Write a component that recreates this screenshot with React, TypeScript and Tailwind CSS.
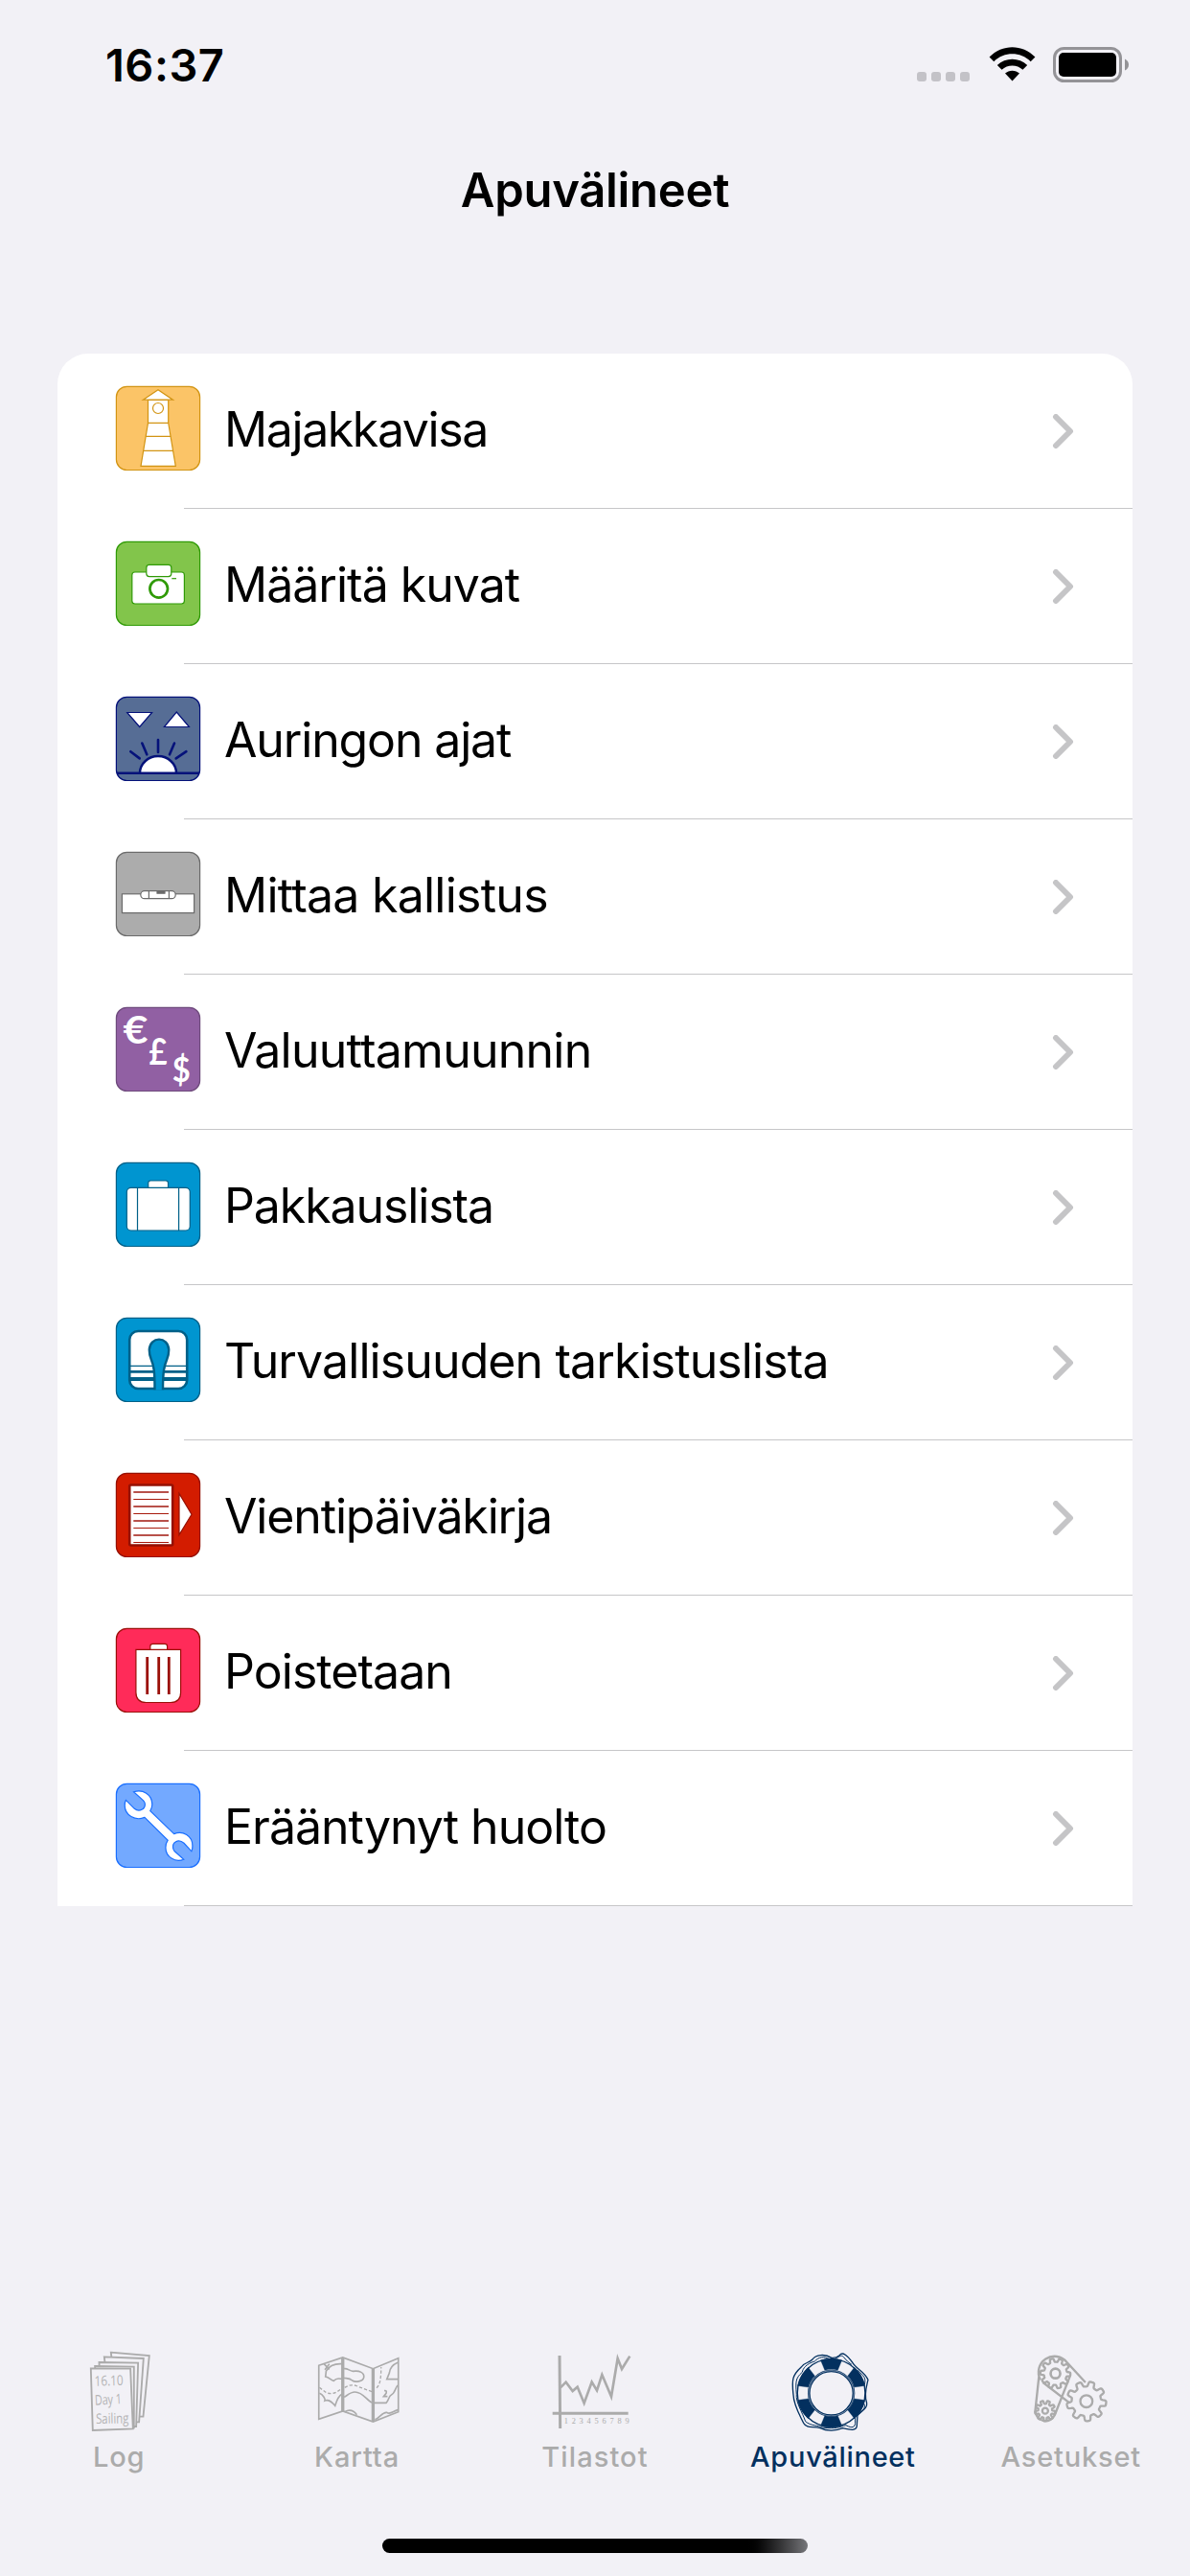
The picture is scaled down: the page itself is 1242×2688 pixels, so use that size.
import type { ReactNode } from "react";

type TileProps = { fill: string; stroke: string; children: ReactNode };

function Tile({ fill, stroke, children }: TileProps) {
  return (
    <svg className="h-[90px] w-[90px] shrink-0" viewBox="0 0 90 90" fill="#fff" stroke={stroke} strokeWidth="1.2">
      <rect x="1.4" y="1.3" width="87.2" height="87.2" rx="11" fill={fill} />
      {children}
    </svg>
  );
}

const tools = [
  {
    label: "Majakkavisa",
    tracking: "tracking-[-1.4px]",
    icon: (
      <Tile fill="#fbc467" stroke="#d29413">
        <path d="M34.5 39.3V15.3H55.7V39.3L63.3 84.3H27Z" />
        <path d="M29.3 15.2 45 4.8 60.5 15.2Z" />
        <path d="M34.5 39.3H55.7M32.2 53.3H58.2M29.8 68.3H60.8" />
        <circle cx="45" cy="24" r="5.5" />
      </Tile>
    ),
  },
  {
    label: "Määritä kuvat",
    tracking: "tracking-[-1px]",
    icon: (
      <Tile fill="#82c54b" stroke="#2f9a06">
        <rect x="17.8" y="33" width="54.6" height="33" rx="3" />
        <rect x="32.8" y="25.4" width="26" height="12.2" rx="3" />
        <circle cx="45.7" cy="50.3" r="9.3" strokeWidth="2.7" />
        <path d="M59.3 39.7H64" />
      </Tile>
    ),
  },
  {
    label: "Auringon ajat",
    tracking: "tracking-[-1.15px]",
    icon: (
      <Tile fill="#566d95" stroke="#05127a">
        <path d="M12.7 17.5H38.6L25.7 32.5ZM51.4 32.5H77.4L64.3 17Z" />
        <path
          d="M45 46V59M28.3 49.5 33.3 61.3M62 49.5 57 61.3M16.3 58.2 25.7 65.4M74.4 58.2 63.7 65.4"
          strokeWidth="2.6"
          strokeLinecap="round"
        />
        <path d="M26 80.7A19 17.6 0 0 1 64 80.7" strokeWidth="2.5" />
        <path d="M2 80.7H88" strokeWidth="2.6" />
      </Tile>
    ),
  },
  {
    label: "Mittaa kallistus",
    tracking: "tracking-[-0.75px]",
    icon: (
      <Tile fill="#acacac" stroke="#6b6b6b">
        <rect x="7.4" y="44.8" width="75.2" height="19.8" />
        <rect x="26.8" y="41.7" width="36.4" height="8" rx="4" />
        <path d="M35.4 41.7V49.7M56.4 41.7V49.7" />
        <path d="M44 41.8H52V44.2H44Z" fill="#6b6b6b" />
      </Tile>
    ),
  },
  {
    label: "Valuuttamuunnin",
    tracking: "tracking-[-0.75px]",
    icon: (
      <Tile fill="#9160a3" stroke="#6e4a7c">
        <g className="font-['Lato',sans-serif]" stroke="none" fontWeight="700">
          <text x="8.5" y="38.5" fontSize="41" textLength="26" lengthAdjust="spacingAndGlyphs">€</text>
          <text x="35.5" y="61.3" fontSize="38" textLength="19" lengthAdjust="spacingAndGlyphs">£</text>
          <text x="59.8" y="79.3" fontSize="37" textLength="19" lengthAdjust="spacingAndGlyphs">$</text>
        </g>
      </Tile>
    ),
  },
  {
    label: "Pakkauslista",
    tracking: "tracking-[-1.1px]",
    icon: (
      <Tile fill="#0095d0" stroke="#006088">
        <path d="M34.7 27.3V22.5Q34.7 20 37.2 20H53Q55.5 20 55.5 22.5V27.3" />
        <rect x="12.3" y="27.3" width="66" height="44.7" rx="4.5" />
        <path d="M23.5 27.3V72M66.6 27.3V72" />
      </Tile>
    ),
  },
  {
    label: "Turvallisuuden tarkistuslista",
    tracking: "tracking-[-0.9px]",
    icon: (
      <Tile fill="#0095d0" stroke="#006088">
        <rect x="15.2" y="15" width="60" height="60" rx="9" strokeWidth="2.6" />
        <path d="M16 51.4H74.5" />
        <path d="M16 57.4H74.5" strokeWidth="2.8" />
        <path d="M16 65H74.5" strokeWidth="4" />
        <path
          d="M41.5 76.3C41.5 56 40.5 51 37.8 44.5C35.8 40 35.8 38 35.8 34.5C36.5 20 55.5 20 56.2 34.5C56.2 38 56.2 40 54.2 44.5C51.5 51 50 56 50 76.3"
          fill="#0095d0"
          strokeWidth="2.4"
        />
      </Tile>
    ),
  },
  {
    label: "Vientipäiväkirja",
    tracking: "tracking-[-1.15px]",
    icon: (
      <Tile fill="#d31c00" stroke="#961003">
        <rect x="15.2" y="13.5" width="45" height="63" rx="1.5" strokeWidth="2.6" />
        <path d="M19.3 21H56M19.3 36H56M19.3 51H56M19.3 66H56" stroke="#b8514a" strokeWidth="2" />
        <path d="M19.3 28.5H56M19.3 43.5H56M19.3 58.5H56M19.3 73.5H56" stroke="#a81a0c" strokeWidth="1" />
        <path d="M67 22.5V65.5L80 44.3Z" />
      </Tile>
    ),
  },
  {
    label: "Poistetaan",
    tracking: "tracking-[-0.95px]",
    icon: (
      <Tile fill="#ff2b59" stroke="#9b0f08">
        <path d="M36.8 23.4V20Q36.8 17.3 39.5 17.3H52Q54.6 17.3 54.6 20V23.4" />
        <path d="M21.9 23.4H68.6V68Q68.6 78.5 58 78.5H32.5Q21.9 78.5 21.9 68Z" />
        <path d="M33.7 31V70M45.7 31V70M56.3 31V70" strokeWidth="2.8" />
      </Tile>
    ),
  },
  {
    label: "Erääntynyt huolto",
    tracking: "tracking-[-1px]",
    icon: (
      <Tile fill="#73a9ff" stroke="#1a6fff">
        <path d="M19.5 9.8C29 6.5 38.8 12.5 38.8 22.8Q38.8 26.5 36.8 29.6L61.6 53.6C71 50 80.8 55.5 80.9 66Q81 69.5 79.9 71.8L72 63.3C66 58 59.5 62.5 60.6 68.5Q61 70.5 62.5 72L71.8 80.3C62.5 84 53 77.5 52.9 68Q52.9 63.5 55.2 60.2L31 36.4C21 40.5 10.3 34 10.2 24Q10.2 20.5 11.4 18.4L20.3 27.3C25.5 31.5 32 27.5 31.3 22Q31 20.3 29.4 18.6Z" />
      </Tile>
    ),
  },
];

// closed outline of a cog wheel with rounded teeth
function gear(cx: number, cy: number, inner: number, outer: number, teeth: number, turn: number) {
  const mid = (inner + outer) / 2;
  const amp = (outer - inner) / 2;
  const points: string[] = [];
  for (let i = 0; i < 240; i++) {
    const a = (i / 240) * Math.PI * 2;
    const r = mid + amp * Math.tanh(3 * Math.sin(teeth * a + turn));
    points.push(`${(cx + r * Math.cos(a)).toFixed(1)} ${(cy + r * Math.sin(a)).toFixed(1)}`);
  }
  return `M${points.join("L")}Z`;
}

// one coloured band of the life ring, centred on the given angle
function band(angle: number) {
  const at = (r: number, deg: number) => {
    const a = (deg * Math.PI) / 180;
    return `${(984 + r * Math.cos(a)).toFixed(1)} ${(231 + r * Math.sin(a)).toFixed(1)}`;
  };
  return `M${at(108, angle - 18)}A108 108 0 0 1 ${at(108, angle + 18)}L${at(74, angle + 16)}A74 74 0 0 0 ${at(74, angle - 16)}Z`;
}

const tabs = [
  {
    label: "Log",
    tracking: "tracking-[0.8px]",
    icon: (
      <svg className="h-[90px] w-[100px]" viewBox="42.6 90 300 270" fill="#f2f1f6" stroke="#ababab" strokeWidth="5.5">
        <path d="M168 104 288 114 269 305 190 305Z" />
        <path d="M147 118 270 123 256 322 170 322Z" />
        <path d="M131 135 253 137 247 336 140 336Z" />
        <path d="M118 147 240 149 240 340 120 340Z" />
        <path d="M105 154 229 155 237 343 111 348Z" />
        <g className="font-['Open_Sans',sans-serif]" fill="#b4b4b5" stroke="none">
          <text x="117" y="209" fontSize="44" textLength="90" lengthAdjust="spacingAndGlyphs" transform="rotate(-1.5 119 209)">16.10</text>
          <text x="118" y="269" fontSize="44" textLength="84" lengthAdjust="spacingAndGlyphs" transform="rotate(-3 120 269)">Day 1</text>
          <text x="121" y="327" fontSize="44" textLength="103" lengthAdjust="spacingAndGlyphs" transform="rotate(-1 122 327)">Sailing</text>
        </g>
      </svg>
    ),
  },
  {
    label: "Kartta",
    tracking: "tracking-[0.9px]",
    icon: (
      <svg className="h-[90px] w-[100px]" viewBox="787.8 90 300 270" fill="none" stroke="#ababab" strokeWidth="5">
        <path d="M817 145 892 120 987 155 1066 122V290L987 321 892 288 817 313Z" />
        <path d="M892 120V288M987 155V321" strokeWidth="10" />
        <path d="M892 140C868 138 850 145 840 162L838 180C850 182 855 192 864 193C875 180 885 188 892 188M896 155C908 153 912 162 924 163C945 160 960 168 958 182C956 196 930 198 922 192C912 183 902 186 896 184" />
        <path d="M819 232C830 236 838 250 836 255C850 250 860 262 868 271C872 258 878 240 890 234M896 244C905 240 915 228 930 228C955 228 968 255 983 261M991 262H1028C1036 255 1036 240 1044 237C1056 232 1056 215 1064 207M1064 136C1050 142 1040 150 1038 168L1030 188H1064" />
        <path d="M819 214 840 230Q865 240 888 216M898 214Q920 200 942 212L984 227M998 215C1010 205 1012 180 1012 150" strokeWidth="4" strokeDasharray="10 6" />
        <path d="M898 290Q920 278 936 299M993 314C1010 308 1015 290 1030 292C1040 300 1050 288 1064 284" />
        <path d="M833 140 850 157M850 140 836 158M1022 224Q1031 222 1028 232L1020 242H1032" />
      </svg>
    ),
  },
  {
    label: "Tilastot",
    tracking: "tracking-[1.1px]",
    icon: (
      <svg className="h-[90px] w-[100px]" viewBox="93 90 300 270" fill="none" stroke="#ababab" strokeWidth="9">
        <path d="M132 114 134 342M110 295H347" />
        <path d="M135 214 152 197 173 225 188 212 209 263 233 197 249 223 265 174 294 242 314 123 327 156 352 116" strokeWidth="8" />
        <text x="146" y="326" fontSize="25" textLength="204" className="font-['Liberation_Serif',serif]" fill="#ababab" stroke="none">123456789</text>
      </svg>
    ),
  },
  {
    label: "Apuvälineet",
    tracking: "tracking-[0.7px]",
    active: true,
    icon: (
      <svg className="h-[90px] w-[100px]" viewBox="838.2 90 300 270" fill="none" stroke="#03305f" strokeWidth="4">
        <path d="M985 121C965 108 935 110 925 126C915 138 900 134 890 150C862 175 860 190 865 235C866 270 885 300 897 325C910 345 925 333 950 341C970 352 1000 350 1020 341C1045 347 1062 350 1064 335L1066 302C1080 285 1098 280 1095 262C1085 235 1096 205 1099 190C1090 165 1060 155 1050 135C1035 115 1020 100 1010 113C1002 120 995 122 985 121Z" />
        <path d="M980 126C960 115 945 118 932 132C905 140 895 155 893 166C872 185 872 195 875 235C872 260 893 290 903 320C920 335 945 332 955 339C1000 345 1010 337 1030 332C1050 343 1058 338 1059 325V305M1087 265C1092 275 1085 285 1072 296M1066 160C1085 178 1094 182 1088 205M990 126C1010 118 1015 110 1022 118Q1035 135 1048 142" strokeWidth="3" />
        <circle cx="984" cy="231" r="106" />
        <circle cx="984" cy="232" r="70" strokeWidth="8" />
        <circle cx="984" cy="232" r="71" stroke="#f2f1f6" strokeWidth="1.5" />
        <path d={[-90, -30, 30, 90, 150, 210].map(band).join("")} fill="#03305f" strokeWidth="1" />
      </svg>
    ),
  },
  {
    label: "Asetukset",
    tracking: "tracking-[0.8px]",
    icon: (
      <svg className="h-[90px] w-[100px]" viewBox="143.4 90 300 270" fill="none" stroke="#ababab" strokeWidth="7">
        <path d="M194 165 181 285A32 32 0 0 0 242 300L291 175M197 190A50 50 0 0 1 280 135L338 198M205 198 292 265" />
        <path d={gear(244, 170, 36, 47, 10, 1)} />
        <path d={gear(212, 287, 22, 32, 9, 0)} />
        <path d={gear(341, 257, 46, 62, 9, 0.6)} fill="#f2f1f6" />
        <circle cx="244" cy="170" r="15" strokeWidth="8" />
        <circle cx="212" cy="287" r="9" />
        <circle cx="341" cy="257" r="19" />
      </svg>
    ),
  },
];

function StatusBar() {
  return (
    <header className="flex h-[135px] items-start justify-between pl-[110px] pr-[62px]">
      <span className="mt-[40px] text-[47px] leading-[56px] font-semibold tracking-[0.5px]">16:37</span>
      <div className="mt-[49px] flex h-[37px]">
        <div className="mt-[26px] flex gap-[5px]">
          <i className="h-[10px] w-[10px] rounded-[3px] bg-[#c3c2c7]" />
          <i className="h-[10px] w-[10px] rounded-[3px] bg-[#c3c2c7]" />
          <i className="h-[10px] w-[10px] rounded-[3px] bg-[#c3c2c7]" />
          <i className="h-[10px] w-[10px] rounded-[3px] bg-[#c3c2c7]" />
        </div>
        <svg className="ml-[20px] h-[37px] w-[49px]" viewBox="0 0 49 37">
          <path d="M.6 10.5C14-3.3 35-3.3 48.4 10.5L43.7 15.3C33 4.7 16 4.7 5.3 15.3Z" />
          <path d="M8.8 19C17.5 10.5 31.5 10.5 40.2 19L35.4 23.8C29.5 18 19.5 18 13.6 23.8Z" />
          <path d="M17 27.6C21 23.7 28 23.7 32 27.6L24.5 35.5Z" />
        </svg>
        <svg className="ml-[18px] h-[37px] w-[81px]" viewBox="0 0 81 37">
          <rect x="1.5" y="1.5" width="69" height="34" rx="10" fill="none" stroke="#949397" strokeWidth="3" />
          <rect x="6" y="6" width="60" height="25" rx="5" />
          <path d="M75 12.5Q79 14.5 79 18.5T75 24.5Z" fill="#949397" />
        </svg>
      </div>
    </header>
  );
}

export default function App() {
  return (
    <div className="flex h-[2688px] w-[1242px] flex-col overflow-hidden bg-[#f2f1f6] font-['Inter',sans-serif] text-black">
      <StatusBar />
      <h1 className="h-[234px] pt-[34px] text-center text-[49px] leading-[60px] font-semibold tracking-[-0.3px]">
        Apuvälineet
      </h1>

      {/* tool list */}
      <ul className="mx-[60px] rounded-t-[32px] bg-white">
        {tools.map((tool) => (
          <li key={tool.label} className="flex h-[162px] flex-col">
            <div className="flex h-[161px] items-start px-[60px] pt-[33px]">
              {tool.icon}
              <span className={`mt-[13px] ml-[24px] grow text-[50px] leading-[66px] whitespace-nowrap ${tool.tracking}`}>
                {tool.label}
              </span>
              <svg className="mt-[30px] h-[36px] w-[24px]" viewBox="0 0 24 36" fill="none" stroke="#c5c5c7" strokeWidth="6">
                <path d="M4 3 19 18 4 33" strokeLinecap="round" strokeLinejoin="round" />
              </svg>
            </div>
            <div className="ml-[132px] h-px bg-[#c6c6c8]" />
          </li>
        ))}
      </ul>

      {/* tab bar */}
      <nav className="mt-auto grid h-[199px] grid-cols-5">
        {tabs.map((tab) => (
          <div key={tab.label} className={`flex flex-col items-center ${tab.active ? "text-[#03305f]" : "text-[#ababab]"}`}>
            {tab.icon}
            <span className={`mt-[6px] text-[29px] leading-[36px] font-medium ${tab.tracking}`}>{tab.label}</span>
          </div>
        ))}
      </nav>
      <div className="mx-auto mb-[24px] h-[15px] w-[444px] rounded-full bg-linear-to-r from-black from-85% to-[#77777b]" />
    </div>
  );
}
